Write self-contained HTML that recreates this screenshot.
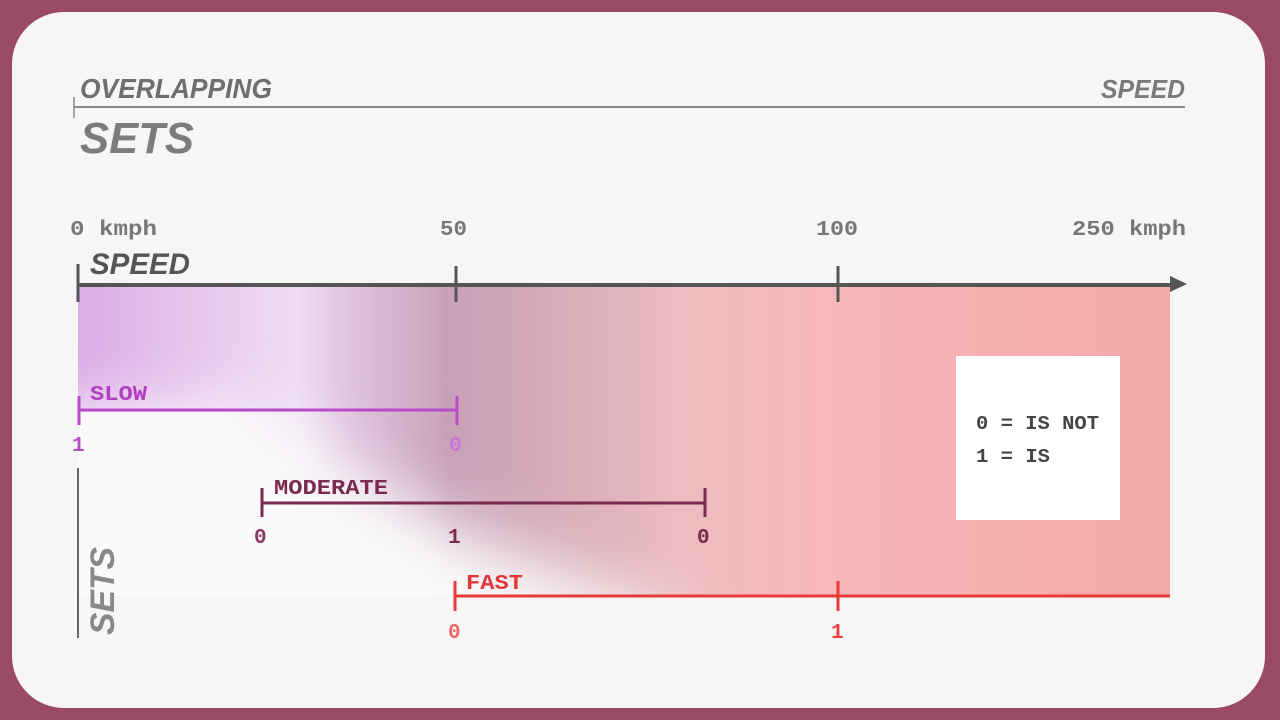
<!DOCTYPE html>
<html><head><style>
html,body{margin:0;padding:0;width:1280px;height:720px;overflow:hidden;background:#9a4a62;}
.card{position:absolute;left:12px;top:12px;width:1253px;height:696px;border-radius:52px;background:#f6f6f6;overflow:hidden}
svg{position:absolute;left:0;top:0;overflow:hidden}
.m{font-family:"Liberation Mono","DejaVu Sans Mono",monospace;font-weight:bold}
.s{font-family:"Liberation Sans",sans-serif;font-weight:bold;font-style:italic}
</style></head><body>
<div class="card"></div>
<svg width="1280" height="720" viewBox="0 0 1280 720">
<defs>
<linearGradient id="top" x1="78" x2="1170" y1="0" y2="0" gradientUnits="userSpaceOnUse">
<stop offset="0" stop-color="#dbace7"/>
<stop offset="0.13" stop-color="#e9cdef"/>
<stop offset="0.2" stop-color="#eedcf2"/>
<stop offset="0.26" stop-color="#dcbfd9"/>
<stop offset="0.34" stop-color="#c8a0b8"/>
<stop offset="0.42" stop-color="#d4aab8"/>
<stop offset="0.55" stop-color="#ecbcc0"/>
<stop offset="0.68" stop-color="#f6b8b8"/>
<stop offset="1" stop-color="#f5a8a8"/>
</linearGradient>
<linearGradient id="wf" x1="78" x2="340" y1="0" y2="0" gradientUnits="userSpaceOnUse">
<stop offset="0" stop-color="#fafafa" stop-opacity="1"/>
<stop offset="0.5" stop-color="#fafafa" stop-opacity="1"/>
<stop offset="1" stop-color="#fafafa" stop-opacity="0"/>
</linearGradient>
<clipPath id="bc"><rect x="78" y="287" width="1092" height="309"/></clipPath>
<filter id="bl" filterUnits="userSpaceOnUse" x="0" y="250" width="1000" height="400"><feGaussianBlur stdDeviation="32"/></filter>
</defs>
<text x="80" y="98" class="s" font-size="28" fill="#6e6e6e" textLength="192" lengthAdjust="spacingAndGlyphs">OVERLAPPING</text>
<text x="1101" y="98" class="s" font-size="26" fill="#7a7a7a" textLength="84" lengthAdjust="spacingAndGlyphs">SPEED</text>
<line x1="74" y1="107" x2="1185" y2="107" stroke="#8a8a8a" stroke-width="2"/>
<line x1="74" y1="97" x2="74" y2="118" stroke="#8a8a8a" stroke-width="1.5"/>
<text x="80" y="153" class="s" font-size="44" fill="#7c7c7c" textLength="114" lengthAdjust="spacingAndGlyphs">SETS</text>
<text x="70" y="235" class="m" font-size="21" fill="#777" textLength="87" lengthAdjust="spacingAndGlyphs">0 kmph</text>
<text x="440" y="235" class="m" font-size="21" fill="#777" textLength="27" lengthAdjust="spacingAndGlyphs">50</text>
<text x="816" y="235" class="m" font-size="21" fill="#777" textLength="42" lengthAdjust="spacingAndGlyphs">100</text>
<text x="1072" y="235" class="m" font-size="21" fill="#777" textLength="114" lengthAdjust="spacingAndGlyphs">250 kmph</text>
<g clip-path="url(#bc)">
<rect x="78" y="287" width="1092" height="309" fill="url(#top)"/>
<polygon points="-100,413 250,413 350,470 480,540 680,620 680,800 -100,800" fill="#fafafa" filter="url(#bl)"/>
<rect x="78" y="412" width="262" height="60" fill="url(#wf)"/>
</g>
<text x="90" y="274" class="s" font-size="30" fill="#555" textLength="100" lengthAdjust="spacingAndGlyphs">SPEED</text>
<line x1="78" y1="285" x2="1172" y2="285" stroke="#555" stroke-width="4"/>
<polygon points="1170,276 1187,284 1170,292" fill="#555"/>
<line x1="78" y1="264" x2="78" y2="302" stroke="#555" stroke-width="3"/>
<line x1="456" y1="266" x2="456" y2="302" stroke="#555" stroke-width="3"/>
<line x1="838" y1="266" x2="838" y2="302" stroke="#555" stroke-width="3"/>
<rect x="956" y="356" width="164" height="164" fill="#fff"/>
<text x="976" y="429" class="m" font-size="19" fill="#444" textLength="123" lengthAdjust="spacingAndGlyphs">0 = IS NOT</text>
<text x="976" y="462" class="m" font-size="19" fill="#444" textLength="74" lengthAdjust="spacingAndGlyphs">1 = IS</text>
<text x="90" y="400" class="m" font-size="21" fill="#b040c0" textLength="57" lengthAdjust="spacingAndGlyphs">SLOW</text>
<line x1="79" y1="410" x2="457" y2="410" stroke="#b84cc8" stroke-width="3"/>
<line x1="79" y1="396" x2="79" y2="425" stroke="#b84cc8" stroke-width="3"/>
<line x1="457" y1="396" x2="457" y2="425" stroke="#b84cc8" stroke-width="3"/>
<text x="72" y="451" class="m" font-size="21" fill="#b84cc8">1</text>
<text x="449" y="451" class="m" font-size="21" fill="#c47ad4">0</text>
<text x="274" y="494" class="m" font-size="21" fill="#7a2a50" textLength="114" lengthAdjust="spacingAndGlyphs">MODERATE</text>
<line x1="262" y1="503" x2="705" y2="503" stroke="#7a2a50" stroke-width="3"/>
<line x1="262" y1="488" x2="262" y2="517" stroke="#7a2a50" stroke-width="3"/>
<line x1="705" y1="488" x2="705" y2="517" stroke="#7a2a50" stroke-width="3"/>
<text x="254" y="543" class="m" font-size="21" fill="#8a3a60">0</text>
<text x="448" y="543" class="m" font-size="21" fill="#7a2a50">1</text>
<text x="697" y="543" class="m" font-size="21" fill="#7a2a50">0</text>
<text x="466" y="589" class="m" font-size="21" fill="#e03838" textLength="57" lengthAdjust="spacingAndGlyphs">FAST</text>
<line x1="455" y1="596" x2="1170" y2="596" stroke="#e83a3a" stroke-width="3"/>
<line x1="455" y1="581" x2="455" y2="611" stroke="#e83a3a" stroke-width="3"/>
<line x1="838" y1="581" x2="838" y2="611" stroke="#e83a3a" stroke-width="3"/>
<text x="448" y="638" class="m" font-size="21" fill="#ee6a6a">0</text>
<text x="831" y="638" class="m" font-size="21" fill="#e84040">1</text>
<line x1="78" y1="468" x2="78" y2="638" stroke="#666" stroke-width="2"/>
<text transform="translate(114,635) rotate(-90)" class="s" font-size="34" fill="#888" textLength="88" lengthAdjust="spacingAndGlyphs">SETS</text>
</svg>
</body></html>
